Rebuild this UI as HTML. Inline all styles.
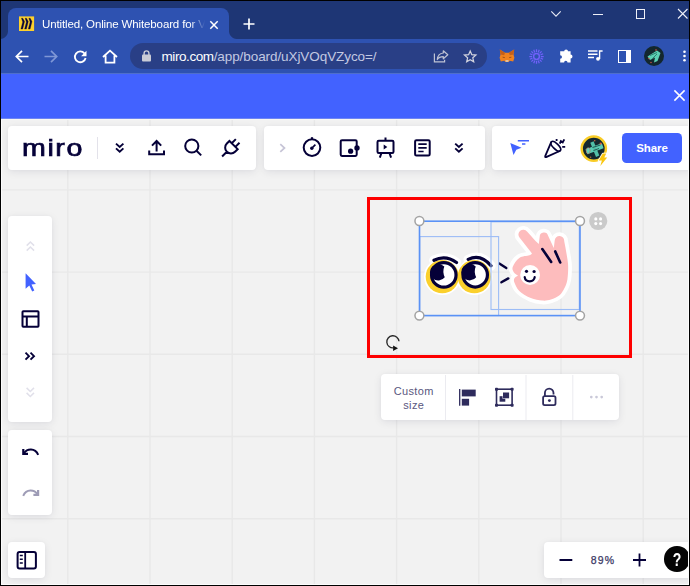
<!DOCTYPE html>
<html><head><meta charset="utf-8"><title>Untitled, Online Whiteboard for Visual Collaboration</title>
<style>
*{box-sizing:border-box;margin:0;padding:0}
html,body{width:690px;height:586px;overflow:hidden;background:#f2f2f2;font-family:"Liberation Sans",sans-serif}
#win{position:absolute;left:0;top:0;width:690px;height:586px;overflow:hidden;background:#f2f2f2}
.abs{position:absolute}
#tabbar{left:0;top:0;width:690px;height:39px;background:#1e3675}
#tab{left:8px;top:8px;width:221px;height:31px;background:#2e52b1;border-radius:8px 8px 0 0}
#tab:before,#tab:after{content:"";position:absolute;bottom:0;width:8px;height:8px}
#tab:before{left:-8px;background:radial-gradient(circle at 0 0,transparent 7.5px,#2e52b1 8.5px)}
#tab:after{right:-8px;background:radial-gradient(circle at 100% 0,transparent 7.5px,#2e52b1 8.5px)}
#toolbar{left:0;top:39px;width:690px;height:35px;background:#2e52b1;border-bottom:1px solid #4f6fcb}
#url{left:130px;top:4px;width:357px;height:26px;border-radius:13px;background:#293f86}
#bluebar{left:0;top:74px;width:690px;height:45px;background:#4262ff;border-bottom:1px solid #6e86f4}
.panel{position:absolute;background:#fff;border-radius:4px;box-shadow:0 2px 8px rgba(5,0,56,.085),0 0 3px rgba(5,0,56,.03)}
svg{position:absolute;overflow:visible}
.t{position:absolute;white-space:nowrap}
#frame{left:0;top:0;width:690px;height:586px;border:1px solid #000;z-index:50}
</style></head><body>
<div id="win">
 <svg id="grid" style="left:0;top:0" width="690" height="586" stroke="#e8e8e8" stroke-width="1.4"><line x1="67.8" y1="118" x2="67.8" y2="586"/><line x1="150.0" y1="118" x2="150.0" y2="586"/><line x1="232.2" y1="118" x2="232.2" y2="586"/><line x1="314.4" y1="118" x2="314.4" y2="586"/><line x1="396.6" y1="118" x2="396.6" y2="586"/><line x1="478.8" y1="118" x2="478.8" y2="586"/><line x1="561.0" y1="118" x2="561.0" y2="586"/><line x1="643.2" y1="118" x2="643.2" y2="586"/><line x1="725.4" y1="118" x2="725.4" y2="586"/><line x1="0" y1="107.7" x2="690" y2="107.7"/><line x1="0" y1="189.9" x2="690" y2="189.9"/><line x1="0" y1="272.1" x2="690" y2="272.1"/><line x1="0" y1="354.3" x2="690" y2="354.3"/><line x1="0" y1="436.5" x2="690" y2="436.5"/><line x1="0" y1="518.7" x2="690" y2="518.7"/><line x1="0" y1="600.9" x2="690" y2="600.9"/></svg>

 <!-- ============ browser chrome ============ -->
 <div id="tabbar" class="abs">
  <div id="tab" class="abs"></div>
  <!-- favicon -->
  <svg style="left:19px;top:16px" width="15" height="15" viewBox="0 -0.300 15 15" fill="#0a0638" stroke="#0a0638" stroke-width=".300"><rect x="0" y="0.100" width="15.100" height="14.600" fill="#fdd02c" stroke="none"/><path d="M2.40 1.90L3.80 1.90L5.60 5.30L3.70 12.80L1.90 12.80L3.70 5.60ZM6.10 1.90L7.50 1.90L9.30 5.30L7.40 12.80L5.60 12.80L7.40 5.60ZM9.80 1.90L11.20 1.90L13.00 5.30L11.10 12.80L9.30 12.80L11.10 5.60Z"/></svg>
  <div class="t" id="tabtitle" style="left:42px;top:16.500px;font-size:11.5px;line-height:15px;color:#fff;letter-spacing:-.13px;width:163px;overflow:hidden;-webkit-mask-image:linear-gradient(90deg,#000 148px,transparent 163px);mask-image:linear-gradient(90deg,#000 148px,transparent 163px)">Untitled, Online Whiteboard for Visual Collaboration</div>
  <svg style="left:209px;top:19.500px" width="10" height="10" viewBox="0 0 10 10" stroke="#fff" stroke-width="1.500" fill="none"><path d="M1.300 1.300l7.400 7.400M8.700 1.300l-7.400 7.400"/></svg>
  <svg style="left:243px;top:18px" width="12" height="12" viewBox="0 0 12 12" stroke="#fff" stroke-width="1.7" fill="none"><path d="M6 .5v11M.5 6h11"/></svg>
  <!-- window controls -->
  <svg style="left:551px;top:11px" width="10" height="6" viewBox="0 0 10 6" stroke="#e8ebf5" stroke-width="1.1" fill="none"><path d="M.3.4L5 5.2 9.7.4"/></svg>
  <div class="abs" style="left:593px;top:14px;width:10px;height:1px;background:#eef0f8"></div>
  <div class="abs" style="left:635.5px;top:9px;width:9.5px;height:9.5px;border:1.2px solid #eef0f8"></div>
  <svg style="left:678px;top:9px" width="10" height="10" viewBox="0 0 10 10" stroke="#eef0f8" stroke-width="1.1" fill="none"><path d="M0 0l9.5 9.5M9.5 0L0 9.5"/></svg>
 </div>
 <div id="toolbar" class="abs">
  <div id="url" class="abs"></div>
  <!-- back -->
  <svg style="left:14.5px;top:10.5px" width="14" height="13" viewBox="0 0 14 13" stroke="#fff" stroke-width="1.7" fill="none"><path d="M13.5 6.5H1.5M7 .8L1.3 6.5 7 12.2"/></svg>
  <!-- forward -->
  <svg style="left:43.5px;top:10.5px" width="14" height="13" viewBox="0 0 14 13" stroke="#7f97d6" stroke-width="1.7" fill="none"><path d="M.5 6.5h12M7 .8l5.7 5.7L7 12.2"/></svg>
  <!-- reload -->
  <svg style="left:73px;top:10.5px" width="14" height="14" viewBox="0 0 14 14" fill="none"><path d="M11.4 3.3A5.4 5.4 0 1 0 12.6 8" stroke="#fff" stroke-width="1.8"/><path d="M13.5.8v5.4H8.1z" fill="#fff"/></svg>
  <!-- home -->
  <svg style="left:101.5px;top:9.5px" width="16" height="15" viewBox="0 0 16 15" stroke="#fff" stroke-width="1.8" fill="none" stroke-linejoin="miter"><path d="M1 8L8 1.6 15 8M3.6 6.5v7.2h8.8V6.5"/></svg>
  <!-- lock -->
  <svg style="left:141.5px;top:11px" width="9" height="12" viewBox="0 0 9 12"><rect x="0" y="4.6" width="9" height="7" rx="1" fill="#c9cbd6"/><path d="M2.1 5V3.3a2.4 2.4 0 0 1 4.8 0V5" fill="none" stroke="#c9cbd6" stroke-width="1.4"/></svg>
  <div class="t" style="left:161.5px;top:8.5px;font-size:13.5px;line-height:17px;letter-spacing:-.17px;color:#c3c9e2"><span style="color:#fff;letter-spacing:-.42px">miro.com</span><span style="letter-spacing:-.08px">/app/board/uXjVOqVZyco=/</span></div>
  <!-- share -->
  <svg style="left:0;top:-39px" width="690" height="80" viewBox="0 0 690 80" fill="none" stroke="#bfc3d4" stroke-width="1.200"><path d="M434.400 53.500V61.800H444.600V59.800"/><path d="M443.300 50.800L447.800 54.800L443.300 58.800V56.600C440.500 56.600 438.500 57.500 437.300 59.500C437.600 55.800 439.800 53.400 443.300 53Z" stroke-linejoin="round"/>
  <!-- star -->
  <path d="M470.2 51.0L471.8 54.7L475.9 55.1L472.8 57.8L473.7 61.8L470.2 59.7L466.7 61.8L467.6 57.8L464.5 55.1L468.6 54.7Z" stroke="#d2d4df" stroke-width="1.250" stroke-linejoin="miter"/></svg>
  <!-- metamask fox -->
  <svg style="left:499px;top:10px" width="16" height="15" viewBox="0 0 16 15"><path d="M.8.600L6 3.800h4L15.200.600l-.7 5 .9 3.200-1.200 3.600-3.400-.6-1.300 1.100H6.500l-1.300-1.100-3.400.6L.600 8.800l.9-3.200z" fill="#f0821e"/><path d="M.8.600L6 3.800 5.200 6.300 1.500 5.600zM15.200.600L10 3.800l.8 2.500 3.700-.7z" fill="#c4601a"/><path d="M6.300 11.200h3.400l-.4 1.500H6.700z" fill="#d9d2cc"/><path d="M3.600 8.200l2.200.4M12.400 8.200l-2.200.4" stroke="#7a3a10" stroke-width=".7"/></svg>
  <!-- purple sun -->
  <svg style="left:529px;top:9.500px" width="15" height="15" viewBox="0 0 15 15" fill="none" stroke="#7060fa"><circle cx="7.500" cy="7.500" r="2.900" stroke-width="1.500"/><path d="M11.90 7.50L14.70 7.50M11.57 9.18L14.15 10.26M10.61 10.61L12.59 12.59M9.18 11.57L10.26 14.15M7.50 11.90L7.50 14.70M5.82 11.57L4.74 14.15M4.39 10.61L2.41 12.59M3.43 9.18L0.85 10.26M3.10 7.50L0.30 7.50M3.43 5.82L0.85 4.74M4.39 4.39L2.41 2.41M5.82 3.43L4.74 0.85M7.50 3.10L7.50 0.30M9.18 3.43L10.26 0.85M10.61 4.39L12.59 2.41M11.57 5.82L14.15 4.74" stroke-width="1.250"/></svg>
  <!-- puzzle -->
  <svg style="left:558.500px;top:10px" width="15" height="14" viewBox="0 0 15 14" fill="#fff"><path d="M5.200 2.300a1.900 1.900 0 0 1 3.800 0h2.600v3.300a1.900 1.900 0 0 1 0 3.800V13.500H8.500a1.700 1.700 0 0 0-3.400 0H1.200V9.800a1.800 1.800 0 0 0 0-3.600V2.300z"/></svg>
  <!-- playlist -->
  <svg style="left:588px;top:10.500px" width="15" height="12" viewBox="0 0 15 12" fill="none" stroke="#fff" stroke-width="1.500"><path d="M0 1h9.500M0 4.300h9.500M0 7.600h6"/><path d="M11.600 9V1h3" stroke-width="1.400"/><circle cx="10" cy="8.800" r="1.900" fill="#fff" stroke="none"/></svg>
  <!-- side panel -->
  <div class="abs" style="left:618px;top:11px;width:13px;height:12.500px;border:1.700px solid #fff;border-right-width:5.500px"></div>
  <!-- avatar -->
  <svg style="left:644px;top:7px" width="20" height="20" viewBox="0 0 20 20"><circle cx="10" cy="10" r="10" fill="#13272e"/><path d="M3.500 10.500L13 4.500l3.500 2.500-3 8-3.500 1.500 1-5-5 2.500z" fill="#5cd0b4"/><path d="M6 9.500l7-3M8 13l5-5" stroke="#2c7d70" stroke-width="1"/><circle cx="12" cy="4" r=".8" fill="#e25a4a"/><circle cx="5" cy="12.500" r=".7" fill="#e25a4a"/><circle cx="7" cy="16.500" r=".7" fill="#e25a4a"/></svg>
  <!-- menu -->
  <svg style="left:682.500px;top:11px" width="3" height="12" viewBox="0 0 3 12" fill="#fff"><circle cx="1.500" cy="1.700" r="1.300"/><circle cx="1.500" cy="6" r="1.300"/><circle cx="1.500" cy="10.300" r="1.300"/></svg>
 </div>
 <div id="bluebar" class="abs">
  <svg style="left:674.400px;top:16.200px" width="11" height="11" viewBox="0 0 11 11" stroke="#fff" stroke-width="1.500" fill="none"><path d="M.4.400l10.200 10.200M10.600.4l-10.200 10.200"/></svg>
 </div>

 <!-- ============ miro panels ============ -->
 <div class="panel" id="p1" style="left:8px;top:126px;width:248px;height:44px"></div>
 <div class="panel" id="p2" style="left:264px;top:126px;width:220.500px;height:44px"></div>
 <div class="panel" id="p3" style="left:492px;top:126px;width:200px;height:44px"></div>
 <div class="panel" id="p4" style="left:8px;top:216px;width:44px;height:206px"></div>
 <div class="panel" id="p5" style="left:8px;top:430px;width:44px;height:85px"></div>
 <div class="panel" id="p6" style="left:8px;top:542px;width:37px;height:36px"></div>
 <div class="panel" id="p7" style="left:544px;top:542px;width:150px;height:36px"></div>
 <div class="panel" id="p8" style="left:381px;top:374px;width:238px;height:46px"></div>


 <!-- ============ top panels content (page coords svg) ============ -->
 <div class="t" id="logo" style="left:22px;top:133.200px;font-size:24px;line-height:30px;color:#050038;letter-spacing:1.350px;-webkit-text-stroke:.72px #050038;transform-origin:0 0;transform:scaleX(1.19)">miro</div>
 <div class="abs" style="left:96.500px;top:137px;width:1px;height:22px;background:#e3e2ea"></div>
 <svg id="topicons" style="left:0;top:0" width="690" height="586" viewBox="0 0 690 586" fill="none" stroke="#050038" stroke-width="2">
  <path d="M116.00 143.60L119.70 147.00L123.40 143.60M116.00 148.40L119.70 151.80L123.40 148.40" fill="none" stroke="#050038" stroke-width="1.9" stroke-linejoin="miter"/>
  <!-- upload -->
  <path d="M149.200 150.500V154.300H164V150.500M156.600 151.500V141.500M152 145.600L156.600 141L161.200 145.600"/>
  <!-- search -->
  <circle cx="191.800" cy="146" r="6.600"/><path d="M196.500 150.800L201.200 155.400"/>
  <!-- plug -->
  <g transform="translate(231.300 147.300) rotate(45)"><path d="M-5.800 -3.200H5.800V0.500A5.800 5.800 0 0 1 -5.800 0.500ZM-2.600 -3.200V-9M2.600 -3.200V-9M0 6.300V13"/></g>
  <!-- chevron right faded -->
  <path d="M280.300 144.200L284.500 148L280.300 151.800" stroke="#c6c4d6" stroke-width="1.700"/>
  <!-- timer -->
  <circle cx="312" cy="147.600" r="8.300"/><path d="M312 139.300V137.200" stroke-width="2.200"/><path d="M312 148L315.400 144.600" stroke-width="1.700"/><circle cx="311.800" cy="148.200" r="1.700" fill="#050038" stroke="none"/>
  <!-- frame with dots -->
  <rect x="340.700" y="140.300" width="16" height="15.600" rx="1.300"/><circle cx="350.600" cy="151.200" r="2.600" fill="#050038" stroke="none"/><circle cx="357" cy="147.900" r="2.700" fill="#050038" stroke="none"/>
  <!-- presentation -->
  <rect x="377.500" y="140.800" width="16" height="12.300" rx="1.300"/><path d="M385.500 140.800V137.600M381.300 153.500L379.800 157.600M389.600 153.500L391.100 157.600"/><path d="M383.700 144.600L387.300 147L383.700 149.400Z" fill="#050038" stroke="none"/>
  <!-- notes -->
  <rect x="415.100" y="140.300" width="14.600" height="15.200" rx="1.300"/><path d="M418.300 144.200H426.700M418.300 147.900H426.700M418.300 151.500H423.600" stroke-width="1.700"/>
  <path d="M455.20 143.60L458.90 147.00L462.60 143.60M455.20 148.40L458.90 151.80L462.60 148.40" fill="none" stroke="#050038" stroke-width="1.9" stroke-linejoin="miter"/>
  <!-- cursor with lines (blue) -->
  <path d="M510.300 142.900L521.600 147.800L516.300 149.700L513.500 155Z" fill="#4262ff" stroke="none"/><path d="M517.800 140.800H529M522 144H525.400" stroke="#4262ff" stroke-width="1.500"/>
  <!-- party popper -->
  <ellipse cx="555.800" cy="146.300" rx="6.300" ry="2.700" transform="rotate(45 555.800 146.300)" stroke-width="1.700"/>
  <path d="M551.300 141.900L545.200 156.200Q544.900 157.400 546.100 157.100L560.300 150.800" stroke-width="1.800" stroke-linejoin="round"/>
  <path d="M555.700 140H557.500M559.800 143.700L560.900 141.200L562.700 142.400L564.300 139.400M562.200 146.900H565.200" stroke-width="1.900"/>
 </svg>
 <!-- user avatar -->
 <svg style="left:580px;top:135px" width="30" height="32" viewBox="0 0 30 32"><circle cx="13.800" cy="13.600" r="12.100" fill="#14282f" stroke="#f9cc26" stroke-width="2.500"/><g transform="translate(-580 -135)"><path d="M585.500 149.300L601.800 143.300L603.600 148.200L587.300 154.200Z" fill="#5ccdb4"/><path d="M590.300 142.800L593.600 141.300L599.300 155.600L596 157.100Z" fill="#52c0a8"/><path d="M592.500 147.500L600.500 145M593.500 150.500L599 148.500" stroke="#1b4f4c" stroke-width=".9"/><ellipse cx="588.200" cy="150.700" rx="1.900" ry="3" fill="#62d3ba" stroke="#b8746a" stroke-width=".7"/><circle cx="600.600" cy="143.600" r="1.100" fill="#d9583f"/><circle cx="594.700" cy="140.800" r=".8" fill="#c9663f"/><circle cx="590.600" cy="157.300" r=".8" fill="#b8653a"/></g><path d="M22.800 18.600H26.200L24.300 22.400H27.200L20.300 30.900L21.900 25.600H18.700Z" fill="#fac710" stroke="#fff" stroke-width="1.800" paint-order="stroke" stroke-linejoin="round"/></svg>
 <!-- share -->
 <div class="abs" style="left:622px;top:133px;width:60px;height:30px;border-radius:4.500px;background:#4262ff;color:#fff;font-weight:bold;font-size:11.500px;line-height:30px;text-align:center;letter-spacing:-.1px">Share</div>

 <!-- ============ left toolbars / bottom ============ -->
 <svg id="lefticons" style="left:0;top:0" width="690" height="586" viewBox="0 0 690 586" fill="none" stroke="#050038" stroke-width="2">
  <path d="M26.70 245.60L30.40 242.00L34.10 245.60M26.70 250.60L30.40 247.00L34.10 250.60" fill="none" stroke="#e1e0ea" stroke-width="1.5"/>
  <!-- select cursor -->
  <path d="M25.600 273.300V288.700L29.300 285.400L32.200 291.600L34.300 290.600L31.500 284.500L36 283.900Z" fill="#4262ff" stroke="none"/>
  <!-- templates -->
  <rect x="22.500" y="311.300" width="16" height="15.500" rx=".8"/><path d="M22.500 316.500H38.500M26.800 316.500V326.800"/>
  <!-- more >> -->
  <path d="M25.500 352.700L29 356.200L25.500 359.700M30.500 352.700L34 356.200L30.500 359.700" stroke-width="1.900"/>
  <path d="M26.60 387.90L30.30 391.50L34.00 387.90M26.60 392.90L30.30 396.50L34.00 392.90" fill="none" stroke="#e1e0ea" stroke-width="1.5"/>
  <!-- undo -->
  <path d="M23.300 449V453.900H28" stroke-width="2.200"/><path d="M23.800 453.400C27 448.600 35 447.600 38.200 454.900" stroke-width="2"/>
  <!-- redo -->
  <g stroke="#9e9cb6"><path d="M38.100 490V494.900H33.400" stroke-width="2.200"/><path d="M37.600 494.400C34.400 489.600 26.400 488.600 23.200 495.900" stroke-width="2"/></g>
  <!-- frames panel icon -->
  <rect x="17.600" y="551.900" width="18.300" height="16.500" rx="2"/><path d="M25.200 552V568.400" stroke-width="1.800"/><path d="M19.800 555.400H22.800M19.800 559.200H22.800M19.800 563H22.800" stroke-width="1.500"/>
  <!-- zoom -->
  <path d="M559.500 560H572.300M633 560H646M639.500 553.500V566.500" stroke-width="1.800"/>
 </svg>
 <div class="t" style="left:590.700px;top:553.700px;font-size:10.500px;line-height:13px;color:#3b3865;letter-spacing:1.250px;-webkit-text-stroke:.25px #3b3865">89%</div>
 <div class="abs" style="left:664.200px;top:546.400px;width:25.500px;height:25.500px;border-radius:50%;background:#050505"></div>
 <div class="t" style="left:670.800px;top:547.500px;width:12px;color:#fff;font-weight:bold;font-size:18px;line-height:24px;text-align:center;transform:scaleX(.78)">?</div>

 <!-- ============ context toolbar + rotate ============ -->
 <div class="t" style="left:382px;top:385.300px;width:63.500px;text-align:center;font-size:11px;line-height:13.800px;color:#5a5780;letter-spacing:.35px;white-space:normal">Custom<br>size</div>
 <svg id="ctx" style="left:0;top:0" width="690" height="586" viewBox="0 0 690 586" fill="none">
  <path d="M445.500 375V420M526 375V420M572.800 375V420" stroke="#ebebf0" stroke-width="1"/>
  <!-- align -->
  <path d="M459.700 389V405.700" stroke="#2e2b5c" stroke-width="1.300"/><rect x="461.800" y="389.600" width="13.900" height="6.800" fill="#2e2b5c"/><rect x="461.800" y="398.800" width="7.300" height="6.800" fill="#2e2b5c"/>
  <!-- frame -->
  <rect x="496.500" y="389.200" width="15.600" height="16" stroke="#2e2b5c" stroke-width="1.600"/>
  <g fill="#2e2b5c"><rect x="495" y="387.700" width="3" height="3" rx=".8"/><rect x="510.600" y="387.700" width="3" height="3" rx=".8"/><rect x="495" y="403.700" width="3" height="3" rx=".8"/><rect x="510.600" y="403.700" width="3" height="3" rx=".8"/>
  <rect x="499.600" y="396.200" width="5.700" height="5.500"/><rect x="503" y="392.500" width="6.100" height="5.800" stroke="#fff" stroke-width=".9" paint-order="stroke"/></g>
  <!-- lock open -->
  <rect x="543.100" y="396.200" width="12.400" height="9" rx="1.600" stroke="#2e2b5c" stroke-width="1.800"/><path d="M544.900 396V392.900A4.300 4.300 0 0 1 553.500 392.900V394.400" stroke="#2e2b5c" stroke-width="1.800"/><circle cx="549.400" cy="400.600" r="1.450" fill="#2e2b5c"/>
  <!-- more -->
  <g fill="#c9c8d8"><circle cx="591.300" cy="397.100" r="1.350"/><circle cx="596.500" cy="397.100" r="1.350"/><circle cx="601.700" cy="397.100" r="1.350"/></g>
  <!-- rotate -->
  <path d="M399 341.300A6.100 6.100 0 1 0 393.600 347.900" stroke="#2a2a2a" stroke-width="1.350"/><path d="M393.100 345.500V350.900L398 348.200Z" fill="#111"/>
 </svg>
 <!-- red highlight -->
 <div class="abs" style="left:367px;top:197px;width:265px;height:161px;border:3px solid #fe0000"></div>


 <!-- ============ stickers & selection ============ -->
 <svg id="stickers" style="left:0;top:0" width="690" height="586" viewBox="0 0 690 586" fill="none">
  <!-- eyes sticker: white outline blob -->
  <g fill="#fff" stroke="#fff" stroke-width="7" stroke-linejoin="round" stroke-linecap="round">
   <circle cx="442.300" cy="276.700" r="14.800"/><circle cx="474.300" cy="276.700" r="14.800"/>
   <path d="M434 260.300Q445.500 254.600 456.500 262.500M468.200 259.400Q480.500 253.300 491 265.800" fill="none" stroke-width="9.500"/>
  </g>
  <circle cx="442.300" cy="276.700" r="16.600" fill="#fbd02c"/><circle cx="474.300" cy="276.700" r="16.600" fill="#fbd02c"/>
  <circle cx="443.800" cy="274.900" r="12.250" fill="#fff" stroke="#050038" stroke-width="3.200"/>
  <circle cx="475.200" cy="274.800" r="12.250" fill="#fff" stroke="#050038" stroke-width="3.200"/>
  <path d="M444.31 266.58A8.3 8.3 0 1 0 444.77 277.27A13.2 13.2 0 0 1 444.31 266.58Z" fill="#050038"/>
  <path d="M475.71 266.48A8.3 8.3 0 1 0 476.17 277.17A13.2 13.2 0 0 1 475.71 266.48Z" fill="#050038"/>
  <path d="M434 260.300Q445.500 254.600 456.500 262.500M468.200 259.400Q480.500 253.300 491 265.800" stroke="#050038" stroke-width="3.200" stroke-linecap="round"/>
  <!-- ok hand sticker -->
  <path d="M532 253.5L519.5 237.6A4.8 4.8 0 0 1 527 231.5C530 234.300 534.500 240.800 538.800 243.900L539.700 236.700A4.250 4.250 0 0 1 548.100 235.800L553.800 248.100L554.700 240.600A4.750 4.750 0 0 1 564.200 241C564.5 242.6 565.4 246.7 566.0 250.7C566.6 254.7 567.9 260.2 568.1 265.0C568.3 269.8 568.0 275.6 567.4 279.4C566.8 283.2 565.8 285.4 564.5 288.0C563.2 290.6 561.8 293.3 559.5 295.2C557.2 297.1 553.8 298.6 550.9 299.5C548.0 300.4 545.6 300.9 542.3 300.6C538.9 300.4 534.6 299.6 530.8 298.0C527.0 296.4 522.0 293.5 519.3 290.9C516.5 288.3 515.1 284.4 514.3 282.3C513.5 280.2 514.0 279.1 514.6 278.0C515.2 276.9 517.6 276.2 518.2 275.8C517.4 275.2 514.5 273.6 513.6 272.0C512.7 270.4 511.9 268.9 512.9 266.5C513.8 264.1 516.5 259.8 519.3 257.9C522.0 256.0 527.3 256.0 529.4 255.3C531.5 254.6 531.6 253.8 532.0 253.5Z" fill="#fff" stroke="#fff" stroke-width="7.500" stroke-linejoin="round"/>
  <path d="M532 253.5L519.5 237.6A4.8 4.8 0 0 1 527 231.5C530 234.300 534.500 240.800 538.800 243.900L539.700 236.700A4.250 4.250 0 0 1 548.100 235.800L553.800 248.100L554.700 240.600A4.750 4.750 0 0 1 564.200 241C564.5 242.6 565.4 246.7 566.0 250.7C566.6 254.7 567.9 260.2 568.1 265.0C568.3 269.8 568.0 275.6 567.4 279.4C566.8 283.2 565.8 285.4 564.5 288.0C563.2 290.6 561.8 293.3 559.5 295.2C557.2 297.1 553.8 298.6 550.9 299.5C548.0 300.4 545.6 300.9 542.3 300.6C538.9 300.4 534.6 299.6 530.8 298.0C527.0 296.4 522.0 293.5 519.3 290.9C516.5 288.3 515.1 284.4 514.3 282.3C513.5 280.2 514.0 279.1 514.6 278.0C515.2 276.9 517.6 276.2 518.2 275.8C517.4 275.2 514.5 273.6 513.6 272.0C512.7 270.4 511.9 268.9 512.9 266.5C513.8 264.1 516.5 259.8 519.3 257.9C522.0 256.0 527.3 256.0 529.4 255.3C531.5 254.6 531.6 253.8 532.0 253.5Z" fill="#fdbcbd"/>
  <circle cx="530.100" cy="275" r="9.900" fill="#fff"/>
  <circle cx="526.500" cy="271.300" r="1.600" fill="#050038"/><circle cx="534.100" cy="271.500" r="1.600" fill="#050038"/>
  <path d="M524.700 277.200C525.500 282.800 533.800 282.800 534.700 277.200" stroke="#050038" stroke-width="2.200" stroke-linecap="round"/>
  <path d="M542.300 249L551.200 261.900M555.200 251.400L560.200 262.500" stroke="#050038" stroke-width="2.600" stroke-linecap="round"/>
  <path d="M499.300 263.500L506.300 268M501.400 282.300L508.300 278.400" stroke="#050038" stroke-width="2.400" stroke-linecap="round"/>
  <!-- selection -->
  <rect x="419.800" y="236.600" width="78.800" height="78.900" stroke="#9cbcf6" stroke-width="1.100"/>
  <rect x="491" y="221.800" width="88.300" height="87.700" stroke="#9cbcf6" stroke-width="1.100"/>
  <rect x="419.500" y="221.200" width="160.500" height="94.400" stroke="#5a92f6" stroke-width="1.600"/>
  <g fill="#fff" stroke="#a3a3a3" stroke-width="1.500"><circle cx="419.400" cy="221" r="4.450"/><circle cx="580" cy="221" r="4.450"/><circle cx="419.400" cy="315.600" r="4.450"/><circle cx="580" cy="315.600" r="4.450"/></g>
  <!-- drag handle -->
  <circle cx="598.200" cy="221" r="9.100" fill="#cacaca"/>
  <g fill="#fff"><circle cx="595.800" cy="218.900" r="1.550"/><circle cx="600.600" cy="218.900" r="1.550"/><circle cx="595.800" cy="223.600" r="1.550"/><circle cx="600.600" cy="223.600" r="1.550"/></g>
 </svg>
 <div class="abs" style="left:1px;top:119px;width:688px;height:466px;border:1px solid #fcfcfc;border-top-color:#f8f7f2;z-index:49"></div>
 <div id="frame" class="abs"></div>
</div>
</body></html>
